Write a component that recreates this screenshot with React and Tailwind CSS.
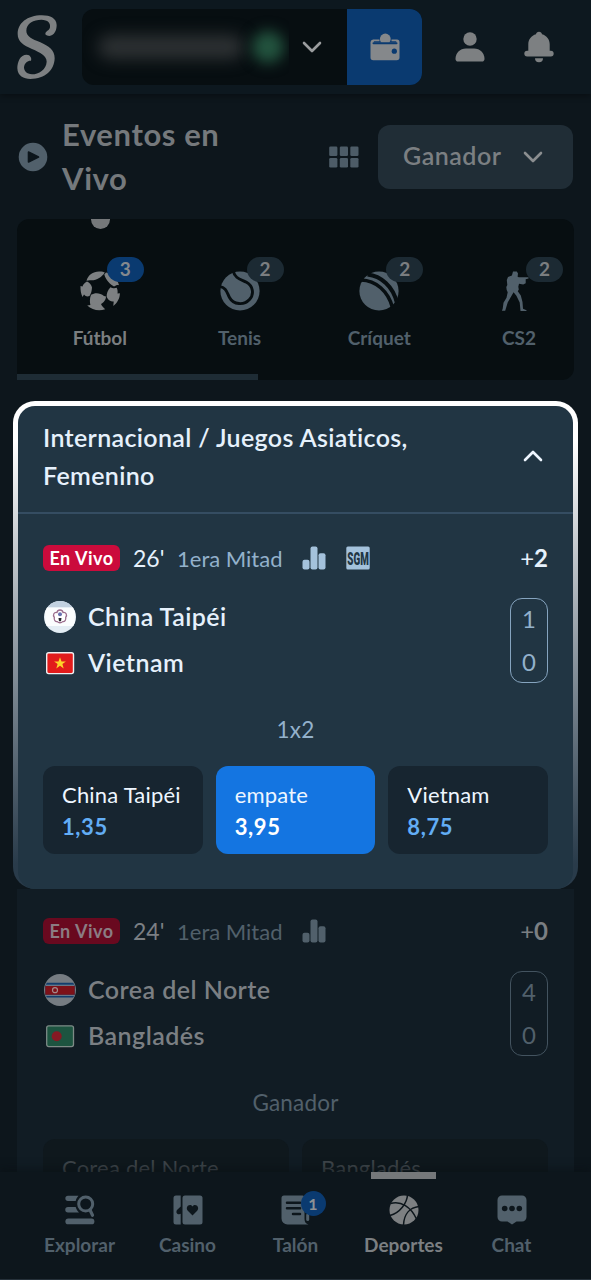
import React from "react";

const sports = [
  { name: "Fútbol", count: 3, active: true, Icon: SoccerIcon },
  { name: "Tenis", count: 2, Icon: TennisIcon },
  { name: "Críquet", count: 2, Icon: CricketIcon },
  { name: "CS2", count: 2, Icon: ShooterIcon },
];

const tabs = [
  { name: "Explorar", Icon: ExploreIcon },
  { name: "Casino", Icon: CasinoIcon },
  { name: "Talón", Icon: SlipIcon, badge: 1 },
  { name: "Deportes", Icon: BasketballIcon, active: true },
  { name: "Chat", Icon: ChatIcon },
];

function Logo() {
  return (
    <svg width="44" height="68" viewBox="6 9 132 204" fill="#7d8082">
      <path d="M100 73C103 77 107 78 112 78 127 76 134 62 134 45 133 25 115 16 90 16 45 16 17 40 17 72 17 95 35 106 60 117 85 128 104 137 104 155 103 178 80 193 60 193 44 193 36 182 36 172 37 158 48 151 57 152 60 145 55 134 44 134 25 134 16 155 16 175 17 198 35 207 55 207 100 207 127 180 128 145 128 120 110 108 85 97 60 86 43 80 43 62 43 40 65 29 88 29 108 29 116 40 114 52 112 64 100 62 100 73Z" />
    </svg>
  );
}

function Chevron({ up, color = "#8b8e90" }) {
  return (
    <svg width="20" height="12" viewBox="0 0 20 12" fill="none" stroke={color} strokeWidth="2.600" strokeLinecap="round" strokeLinejoin="round">
      <path d={up ? "M2 10 10 2 18 10" : "M2 2 10 10 18 2"} />
    </svg>
  );
}

function WalletIcon() {
  return (
    <svg width="30" height="28" viewBox="0 0 30 28">
      <path fill="#85888b" d="M4 6.500h5.500v1.800H4.200c-.6 0-.6 1.200 0 1.200h21.700c.7 0 .7-1.200 0-1.200h-4.400V6.500H27a2.500 2.500 0 0 1 2.500 2.500v15.500A2.800 2.800 0 0 1 26.700 27.300H3.300A2.800 2.800 0 0 1 .5 24.500V9A3 3 0 0 1 4 6.500Z" />
      <circle cx="15.300" cy="6" r="5.400" fill="#85888b" />
      <path d="M3.500 10.300h23" stroke="#0a3a70" strokeWidth="2" strokeLinecap="round" />
      <circle cx="24.300" cy="18.200" r="2.600" fill="#0a3a70" />
    </svg>
  );
}

function UserIcon() {
  return (
    <svg width="30" height="30" viewBox="0 0 30 30" fill="#7d8082">
      <circle cx="15" cy="7" r="6.700" />
      <path d="M11 16.500h8c6 0 10.500 4.500 10.500 10.500 0 1.500-1 2.600-2.500 2.600H3C1.500 29.600.5 28.500.5 27 .5 21 5 16.500 11 16.500Z" />
    </svg>
  );
}

function BellIcon() {
  return (
    <svg width="30" height="32" viewBox="0 0 30 32" fill="#7d8082">
      <path d="M15 .7c1.600 0 2.800 1.100 3 2.500 4.600 1.300 7.700 5.200 7.700 10v6.500h1.100a2.900 2.900 0 0 1 0 5.800H3.200a2.900 2.900 0 0 1 0-5.800h1.100v-6.500c0-4.800 3.100-8.700 7.700-10 .2-1.400 1.400-2.500 3-2.500Z" />
      <path d="M11 27.200h8a4 4 0 0 1-8 0Z" />
    </svg>
  );
}

function PlayIcon() {
  return (
    <svg width="30" height="30" viewBox="0 0 30 30">
      <circle cx="15" cy="15" r="14.300" fill="#51606b" />
      <path d="M10.500 10v10L20.500 15Z" fill="#0d161c" stroke="#0d161c" strokeWidth="1.600" strokeLinejoin="round" />
    </svg>
  );
}

function SoccerIcon() {
  return (
    <svg width="40" height="40" viewBox="0 0 40 40" fill="#7d8082">
      <path d="M6.500 9.800C8 4 13 .500 19 .500c3.500 0 5 .500 5.800 1C22 6 17 9.300 11.500 9.300 9.500 9 8 9.200 6.500 9.800Z" />
      <path d="M24.300 3.500 26 1.600C32 2.500 37.500 8 39 14.200c-1.800-.5-3.200.2-5 1.300C30 13 26 9.500 24.300 3.500Z" />
      <path d="M7 10.500c2.500 1 4.700 3.500 5 6-.3 3.500-.8 6-2.500 8.500C7.500 26 5.500 25.500 4 23.500l-1.500 2.600C1 23 .3 19 .5 15l2 .5c.5-2 2.200-4 4.500-5Z" />
      <path d="M30.500 16.200c2.500 1.500 4.500 1.200 6.200.6 1 2 1.100 4 .8 5.800l2.400-.3c0 5-2.600 9.700-6.600 12.700l.4-4.500c-2.500.3-5-.5-7-4.500-.3-3.500 1-7 3.800-9.800Z" />
      <path d="M11 23.800c4-2.500 9-2.200 13 1.200l2 .5c0 3.500-2.500 6.300-5 7.500.8 2 2.500 3.700 4.200 5.200-6.200 2.300-13.200.8-18-3.700l3.200-.5c-.8-3.500-.7-7 .6-10.200Z" />
    </svg>
  );
}

function TennisIcon() {
  return (
    <svg width="40" height="40" viewBox="0 0 40 40">
      <circle cx="20" cy="20" r="19.600" fill="#51606b" />
      <path
        d="M-1 15.500C6.500 16 7 22 9.500 26.500 13.500 34 24 34.500 29.500 28.500c5-5.500 3.500-13.500-3-17.200C21.500 8.500 14.500 8 13-1"
        fill="none"
        stroke="#070e11"
        strokeWidth="2.900"
      />
    </svg>
  );
}

function CricketIcon() {
  return (
    <svg width="40" height="40" viewBox="0 0 40 40">
      <circle cx="20" cy="20" r="19.600" fill="#51606b" />
      <path d="M2 9C17 9.500 29 20 33.500 36.500" fill="none" stroke="#070e11" strokeWidth="3.600" />
      <path d="M8.500 3.500C22 5 34 15 38 32" fill="none" stroke="#070e11" strokeWidth="4" />
    </svg>
  );
}

function ShooterIcon() {
  return (
    <svg width="40" height="40" viewBox="0 0 40 40" fill="#51606b">
      <path d="M14 .5h3.800l1.200 2-.4 3.300 1.200.4h9.700v1.200l-2.800.8v4l-2.500 1.200-4.200-.6-.7 3 .5 2.700-1 1.800 3 4.200 1.700 6.500.5 6.700 3.500 1.500v.8H21.500l-.8-8.500-3.300-6.700-2.800-3.500-3.200 5.500-2.700 4.600-2.500 8.400H2.900l.8-2 .8-6 3-5 1.200-5.500L7.700 19l-.4-3 1-2-.5-5 1.200-3 3.900-1.500Z" />
    </svg>
  );
}

function GridIcon() {
  return (
    <svg width="30" height="22" viewBox="0 0 30 22" fill="#4d5c67">
      {[0.2, 10.8, 21.300].map((x) => (
        <React.Fragment key={x}>
          <rect x={x} y="0.500" width="8.200" height="9.500" rx="1.300" />
          <rect x={x} y="12" width="8.200" height="9.500" rx="1.300" />
        </React.Fragment>
      ))}
    </svg>
  );
}

function StatsIcon({ color }) {
  return (
    <svg width="24" height="24" viewBox="0 0 24 24" fill={color}>
      <rect x="0.500" y="13.800" width="7" height="9.700" rx="2" />
      <rect x="8.500" y="0.500" width="7" height="23" rx="2" />
      <rect x="16.500" y="7.300" width="7" height="16.200" rx="2" />
    </svg>
  );
}

function SgmIcon() {
  return (
    <svg width="24" height="24" viewBox="0 0 24 24">
      <rect x="0.300" y="0.500" width="23.400" height="23" rx="1.500" fill="#a4c2dc" />
      <text
        transform="translate(1.300 18.600) scale(1 1.500)"
        textLength="21.500"
        lengthAdjust="spacingAndGlyphs"
        letterSpacing="0"
        fontFamily="Roboto, sans-serif"
        fontSize="12.500"
        fontWeight="900"
        fill="#213543"
      >
        SGM
      </text>
    </svg>
  );
}

function ExploreIcon() {
  return (
    <svg width="30" height="30" viewBox="0 0 30 30" fill="#51606b">
      <path d="M3 .700h10.500c-1.500 1.500-2.400 3.300-2.800 5.300H3A2.650 2.650 0 0 1 3 .700ZM3 12h7.700c.6 2.200 1.700 4 3.300 5.500H3A2.700 2.700 0 0 1 3 12Z" />
      <rect x="0.400" y="23.500" width="29" height="5.800" rx="2.900" />
      <circle cx="20.700" cy="9" r="7" fill="none" stroke="#51606b" strokeWidth="3" />
      <path d="m25 15 2.500 5.300" stroke="#51606b" strokeWidth="3.200" strokeLinecap="round" />
    </svg>
  );
}

function CasinoIcon() {
  return (
    <svg width="30" height="30" viewBox="0 0 30 30">
      <path fill="#51606b" d="M3 .500h4.700v11L4 15c-1.400 2.500 0 4.500 2.300 4.300l1.400-.500v10.700H3A2.500 2.500 0 0 1 .500 27V3A2.500 2.500 0 0 1 3 .500Z" />
      <rect x="9.500" y="0.500" width="20" height="29" rx="2.500" fill="#51606b" />
      <path fill="#0d161c" d="M19.500 20.500 14.800 15.800c-3-3.500 1.700-8 4.700-4.300 3-3.700 7.700.8 4.700 4.300Z" />
    </svg>
  );
}

function SlipIcon() {
  return (
    <svg width="30" height="30" viewBox="0 0 30 30">
      <path fill="#51606b" d="M3 .500h18.500a2 2 0 0 1 2 2V24c0 3 1.500 5 4 5.500H6.500a6 6 0 0 1-6-6V3A2.500 2.500 0 0 1 3 .500Z" />
      <path d="M6 7.700h13M6 13.300h13M12 19h7" stroke="#0d161c" strokeWidth="2.500" strokeLinecap="round" />
      <path d="M26.700 20v4.500" stroke="#51606b" strokeWidth="3" strokeLinecap="round" />
    </svg>
  );
}

function BasketballIcon() {
  return (
    <svg width="30" height="30" viewBox="0 0 30 30">
      <circle cx="15" cy="15" r="14.500" fill="#7d8082" />
      <path
        d="M18.500 0C18 8 11 18 1 20.500M1.500 8.500C12 5.500 22 12 27.500 24M30 11.500C21 12.500 15 19 14.500 30"
        fill="none"
        stroke="#0d161c"
        strokeWidth="1.500"
      />
    </svg>
  );
}

function ChatIcon() {
  return (
    <svg width="30" height="30" viewBox="0 0 30 30">
      <path fill="#51606b" d="M5 .500h20a4.500 4.500 0 0 1 4.500 4.500v17a4.500 4.500 0 0 1-4.500 4.500h-5.500L15 29.500l-4.500-3H5A4.500 4.500 0 0 1 .500 22V5A4.500 4.500 0 0 1 5 .500Z" />
      <g fill="#0d161c">
        <circle cx="7.700" cy="13.500" r="2.800" />
        <circle cx="15" cy="13.500" r="2.800" />
        <circle cx="22.300" cy="13.500" r="2.800" />
      </g>
    </svg>
  );
}

function TaipeiFlag() {
  return (
    <svg width="32" height="32" viewBox="0 0 32 32">
      <circle cx="16" cy="16" r="16" fill="#e4edf4" />
      <path d="M5.500 4.200C11-1.300 21-1.300 26.500 4.200L28.500 6.500H3.500Z" fill="#c2d1e0" />
      <path d="M3 6.500h26l1.800 4v10.500l-1.500 4H2.700l-1.500-4V10.500Z" fill="#fbfdfe" />
      <path
        d="M16 9c2 0 2.800 1.200 3 2.500 3-.5 4.500 2.200 2.700 4.800.5 3-1 4.600-3 4.300-1.500 1.500-4 1.500-5.400 0-2 .3-3.500-1.300-3-4.300-1.800-2.600-.3-5.300 2.700-4.800.2-1.300 1-2.500 3-2.500Z"
        fill="#fff"
        stroke="#9b6d8d"
        strokeWidth="1.300"
      />
      <circle cx="16" cy="13.300" r="2" fill="#6a72b0" />
      <path d="M14.500 17h3l-.5 3.300h-2Z" fill="#25262c" />
    </svg>
  );
}

function VietnamFlag() {
  return (
    <svg width="32" height="32" viewBox="0 0 32 32">
      <rect x="2.700" y="5.800" width="26.800" height="20.800" rx="2" fill="#e21b1b" stroke="#eef0f2" strokeWidth="1.400" />
      <path d="m16 10.200 1.500 4.200h4.400l-3.500 2.700 1.300 4.300-3.700-2.600-3.700 2.600 1.300-4.300-3.500-2.700h4.400Z" fill="#fdd32a" />
    </svg>
  );
}

function KoreaFlag() {
  return (
    <svg width="32" height="32" viewBox="0 0 32 32">
      <circle cx="16" cy="16" r="16" fill="#767c82" />
      <path d="M2.800 8.800h26.400l1.500 3v8.700l-1.500 3H2.800l-1.500-3v-8.700Z" fill="#123d6c" />
      <path d="M1.800 10.800h28.400v.9H1.800Zm0 10h28.400v.9H1.800Z" fill="#858a90" />
      <path d="M1.300 12h29.400v8.700H1.300Z" fill="#7d1118" />
      <circle cx="11" cy="16.200" r="2.500" fill="none" stroke="#a5888b" strokeWidth="1.200" />
    </svg>
  );
}

function BangladeshFlag() {
  return (
    <svg width="32" height="32" viewBox="0 0 32 32">
      <rect x="2.700" y="5.800" width="26.800" height="20.800" rx="2" fill="#1d5440" stroke="#7d8a86" strokeWidth="1.300" />
      <circle cx="12.700" cy="16.200" r="5" fill="#861923" />
    </svg>
  );
}

function Match({ match, dim }) {
  const strong = dim ? "text-[#7b7f83]" : "text-[#e6f1fc]";
  const muted = dim ? "text-[#51606b]" : "text-[#93b1cb]";

  return (
    <div>
      {/* Status row */}
      <div className="flex h-[26px] items-center">
        <span
          className={`flex h-[26px] w-[77px] shrink-0 items-center justify-center rounded-md text-[18px] font-bold tracking-[0.5px] ${
            dim ? "bg-[#69091f] text-[#8b7c83]" : "bg-[#cb0b3c] text-white"
          }`}
        >
          En Vivo
        </span>
        <span className={`ml-[13px] w-[44px] text-[23px] ${strong}`}>{match.minute}</span>
        <span className={`w-[125px] whitespace-nowrap text-[22px] ${muted}`}>1era Mitad</span>
        <StatsIcon color={dim ? "#51606b" : "#a4c2dc"} />
        {match.sgm && (
          <span className="ml-5">
            <SgmIcon />
          </span>
        )}
        <span className={`ml-auto text-[24px] ${strong}`}>
          +<b>{match.more}</b>
        </span>
      </div>

      {/* Teams and score */}
      <div className="mt-[27px] flex h-[85px] justify-between">
        <div className="flex flex-col gap-[14px] pt-[3px]">
          {match.teams.map(({ name, Flag }) => (
            <div key={name} className="flex h-8 items-center gap-[12px] pl-px">
              <Flag />
              <span className={`whitespace-nowrap text-[25px] font-semibold tracking-[0.45px] ${strong}`}>{name}</span>
            </div>
          ))}
        </div>
        <div
          className={`flex w-[38px] flex-col items-center justify-between rounded-[12px] border-[1.500px] text-[24px] leading-[40px] ${
            dim ? "border-[#43535f]" : "border-[#86a4bf]"
          } ${muted}`}
        >
          {match.score.map((s, i) => (
            <span key={i}>{s}</span>
          ))}
        </div>
      </div>

      <div className={`mt-8 h-[30px] text-center text-[22.500px] leading-[30px] tracking-[0.200px] ${muted}`}>{match.market}</div>

      {/* Odds */}
      <div className="mt-[21px] flex gap-[13px]">
        {match.odds.map((o) => (
          <div
            key={o.name}
            className={`h-[88px] flex-1 rounded-[12px] pl-[19px] pt-[13px] ${
              dim ? "bg-[#0f181d]" : o.active ? "bg-[#1475e1]" : "bg-[#172530]"
            }`}
          >
            <div className={`whitespace-nowrap text-[22px] leading-8 tracking-[0.200px] ${dim ? "text-[#3d4449]" : "text-[#eef6ff]"}`}>
              {o.name}
            </div>
            {o.price && (
              <div className={`text-[22px] font-bold leading-8 tracking-[0.600px] ${o.active ? "text-white" : "text-[#62adf5]"}`}>
                {o.price}
              </div>
            )}
          </div>
        ))}
      </div>
    </div>
  );
}

const featured = {
  minute: "26'",
  more: 2,
  sgm: true,
  teams: [
    { name: "China Taipéi", Flag: TaipeiFlag },
    { name: "Vietnam", Flag: VietnamFlag },
  ],
  score: [1, 0],
  market: "1x2",
  odds: [
    { name: "China Taipéi", price: "1,35" },
    { name: "empate", price: "3,95", active: true },
    { name: "Vietnam", price: "8,75" },
  ],
};

const next = {
  minute: "24'",
  more: 0,
  teams: [
    { name: "Corea del Norte", Flag: KoreaFlag },
    { name: "Bangladés", Flag: BangladeshFlag },
  ],
  score: [4, 0],
  market: "Ganador",
  odds: [{ name: "Corea del Norte" }, { name: "Bangladés" }],
};

export default function App() {
  return (
    <div className="flex h-[1280px] w-[591px] flex-col overflow-hidden bg-[#0d161c] font-['Lato','Open_Sans',sans-serif]">
      {/* Top bar */}
      <header className="flex h-[94px] shrink-0 items-center bg-[#0d181f] pl-[14px] shadow-[0_2px_6px_rgba(0,0,0,0.35)]">
        <Logo />
        <div className="ml-6 flex h-[76px] w-[340px] overflow-hidden rounded-[12px] bg-[#070e11]">
          <div className="flex w-[207px] items-center overflow-hidden pl-4">
            <div className="h-6 w-[146px] rounded-full bg-[#2d3133] blur-[8px]" />
            <div className="ml-2 size-8 rounded-full bg-[#23543f] blur-[7px]" />
          </div>
          <div className="flex flex-1 items-center pl-[13px]">
            <Chevron color="#9a9c9e" />
          </div>
          <div className="flex w-[75px] items-center justify-center bg-[#0a3a70]">
            <WalletIcon />
          </div>
        </div>
        <div className="ml-[33px]">
          <UserIcon />
        </div>
        <div className="ml-[39px]">
          <BellIcon />
        </div>
      </header>

      {/* Section title */}
      <div className="flex h-[125px] shrink-0 items-center pl-[18px] pr-[18px]">
        <PlayIcon />
        <h1 className="-mt-[2px] ml-[14px] w-[200px] text-[31px] font-bold leading-[44px] tracking-[0.600px] text-[#75797c]">
          Eventos en
          <br />
          Vivo
        </h1>
        <div className="ml-[67px]">
          <GridIcon />
        </div>
        <button className="ml-auto flex h-[64px] w-[195px] items-center rounded-[12px] bg-[#202d36] pl-[25px] text-[25px] font-semibold tracking-[0.500px] text-[#7b7f82]">
          <span className="-mt-[2px] w-[120px] text-left">Ganador</span>
          <Chevron />
        </button>
      </div>

      {/* Sports strip */}
      <div className="mx-[17px] flex h-[161px] shrink-0 flex-col overflow-hidden rounded-[12px] rounded-bl-none bg-[#070e11]">
        <div className="ml-[74px] h-[10px] w-[19px] rounded-b-full bg-[#75787a]" />
        <div className="-mr-10 ml-[13px] flex">
          {sports.map(({ name, count, active, Icon }) => (
            <div key={name} className="flex w-[139.700px] shrink-0 flex-col items-center pt-[42px]">
              <div className="relative">
                <Icon />
                <span
                  className={`absolute -top-[14px] left-[27px] flex h-[25px] w-[37px] items-center justify-center rounded-full text-[19px] font-bold ${
                    active ? "bg-[#0a3a70] text-[#85898d]" : "bg-[#1c2a33] text-[#7b7e80]"
                  }`}
                >
                  {count}
                </span>
              </div>
              <span className={`mt-[13px] text-[19px] font-bold leading-7 ${active ? "text-[#7b7e80]" : "text-[#51606b]"}`}>
                {name}
              </span>
            </div>
          ))}
        </div>
        <div className="mt-auto h-[6px] w-[241px] bg-[#1e2c35]" />
      </div>

      {/* Highlighted event */}
      <div className="ml-[13px] mt-[21px] w-[565px] shrink-0 rounded-[22px] bg-linear-to-b from-white from-8% to-[#293b4a] to-95% px-[5px] pt-[5px]">
        <section className="h-[483px] rounded-[17px] bg-[#213543]">
          <div className="flex h-[108px] items-center justify-between border-b-2 border-[#354d62] px-[25px] pb-[7px]">
            <h2 className="text-[25px] font-semibold leading-[38px] tracking-[0.350px] text-[#e6f1fc]">
              Internacional / Juegos Asiaticos,
              <br />
              Femenino
            </h2>
            <div className="mr-[5px]">
              <Chevron up color="#eef6ff" />
            </div>
          </div>
          <div className="px-[25px] pt-[31px]">
            <Match match={featured} />
          </div>
        </section>
      </div>

      <section className="mx-[17px] h-[283px] shrink-0 overflow-hidden bg-[#111c24] pl-[26px] pr-[26px] pt-[29px]">
        <Match match={next} dim />
      </section>

      {/* Bottom navigation */}
      <nav className="flex h-[108px] shrink-0 border-b border-[#26313a] bg-[#0d161c] pl-[25.500px] shadow-[0_-3px_8px_rgba(8,14,18,0.500)]">
        {tabs.map(({ name, Icon, badge, active }) => (
          <div key={name} className="flex w-[108px] flex-col items-center">
            <div className={`h-[7px] w-[65px] ${active ? "bg-[#75787a]" : "bg-transparent"}`} />
            <div className="relative mt-4">
              <Icon />
              {badge && (
                <span className="absolute -top-[4px] left-[20px] flex size-[25px] items-center justify-center rounded-full bg-[#0a3a70] text-[16px] font-bold text-[#8d9195]">
                  {badge}
                </span>
              )}
            </div>
            <span className={`mt-[6px] text-[19px] font-bold leading-7 ${active ? "text-[#7b7f82]" : "text-[#51606b]"}`}>{name}</span>
          </div>
        ))}
      </nav>
    </div>
  );
}
